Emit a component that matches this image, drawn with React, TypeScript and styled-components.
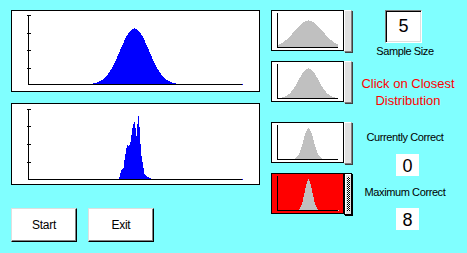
import React from 'react'
import styled, { createGlobalStyle } from 'styled-components'

const GlobalStyle = createGlobalStyle`
  html, body {
    margin: 0;
    padding: 0;
    background: #80ffff;
  }
  body {
    font-family: 'Liberation Sans', Arial, sans-serif;
  }
`

const BLUE = '#0000ff'
const GREY = '#c0c0c0'

// one column height per pixel for a bell curve
const bell = (from: number, to: number, center: number, peak: number, sigma: number) => {
  const out: number[] = []
  for (let x = from; x < to; x++) {
    out.push(Math.floor(peak * Math.exp(-((x - center) ** 2) / (2 * sigma * sigma))))
  }
  return out
}

const histPath = (x0: number, heights: number[], base: number) => {
  let d = `M${x0} ${base}`
  heights.forEach((h, i) => {
    d += `V${base - h}H${x0 + i + 1}`
  })
  return d + `V${base}Z`
}

type Plot = {
  width: number
  height: number
  axisX: number
  axisTop: number
  base: number
  axisEnd: number
  ticks?: number[]
  startX: number
  heights: number[]
  fill: string
  endDot?: string
}

const sampleBars = [
  2, 6, 9, 10, 11, 19, 25, 31, 34, 33, 34, 37, 44, 51, 55, 57, 51, 43, 55, 63, 52, 35,
  23, 17, 11, 5, 4, 3, 2, 2, 1, 1,
]

const mainPlot = {
  width: 247,
  height: 80,
  axisX: 16,
  axisEnd: 230,
  fill: BLUE,
  endDot: BLUE,
}

const populationPlot: Plot = {
  ...mainPlot,
  axisTop: 4,
  base: 73,
  ticks: [4, 22, 39, 57],
  startX: 17,
  heights: bell(17, 230, 122, 56, 14.5),
}

const samplePlot: Plot = {
  ...mainPlot,
  axisTop: 5,
  base: 75,
  ticks: [5, 22, 40, 58],
  startX: 107,
  heights: sampleBars,
}

const thumbPlot = (peak: number, sigma: number, endDot?: string): Plot => ({
  width: 71,
  height: 39,
  axisX: 5,
  axisTop: 2,
  base: 36,
  axisEnd: 66,
  startX: 6,
  heights: bell(6, 66, 36, peak, sigma),
  fill: GREY,
  endDot,
})

const choices = [
  { plot: thumbPlot(27, 14), gap: 0 },
  { plot: thumbPlot(30, 10), gap: 9 },
  { plot: thumbPlot(31, 5.2), gap: 19 },
  { plot: thumbPlot(31, 3.8, '#e0e0e0'), gap: 9, selected: true },
]

const Chart = ({ plot }: { plot: Plot }) => {
  const { width, height, axisX, axisTop, base, axisEnd, ticks = [], startX, heights, fill, endDot } = plot
  return (
    <Svg width={width} height={height} viewBox={`0 0 ${width} ${height}`}>
      <path d={histPath(startX, heights, base)} fill={fill} />
      <rect x={axisX} y={axisTop} width={1} height={base - axisTop + 1} fill="#000" />
      <rect x={axisX} y={base} width={axisEnd - axisX} height={1} fill="#000" />
      {ticks.map((t) => (
        <rect key={t} x={axisX - 1} y={t} width={4} height={1} fill="#000" />
      ))}
      {endDot && <rect x={axisEnd} y={base} width={1} height={1} fill={endDot} />}
    </Svg>
  )
}

const App = () => {
  return (
    <>
      <GlobalStyle />
      <Screen>
        <LeftColumn>
          <Panel>
            <Chart plot={populationPlot} />
          </Panel>
          <Panel>
            <Chart plot={samplePlot} />
          </Panel>
          <ButtonRow>
            <Button>Start</Button>
            <Button>Exit</Button>
          </ButtonRow>
        </LeftColumn>

        <ThumbColumn>
          {choices.map((c, i) => (
            <ThumbRow key={i} $gap={c.gap}>
              <ThumbBox $selected={c.selected}>
                <Chart plot={c.plot} />
              </ThumbBox>
              <Strip $selected={c.selected}>{c.selected && <FocusDots />}</Strip>
            </ThumbRow>
          ))}
        </ThumbColumn>

        <InfoColumn>
          <SizeBox>5</SizeBox>
          <Caption $top={2}>Sample Size</Caption>
          <Prompt>
            Click on Closest
            <br />
            Distribution
          </Prompt>
          <Caption $top={22}>Currently Correct</Caption>
          <ValueBox $top={10}>0</ValueBox>
          <Caption $top={10}>Maximum Correct</Caption>
          <ValueBox $top={9}>8</ValueBox>
        </InfoColumn>
      </Screen>
    </>
  )
}
export default App

const Screen = styled.div`
  display: flex;
  align-items: flex-start;
  width: 467px;
  height: 253px;
  padding: 10px 0 0 11px;
  box-sizing: border-box;
`

const LeftColumn = styled.div`
  display: flex;
  flex-direction: column;
  width: 249px;
`

const Svg = styled.svg`
  display: block;
  shape-rendering: crispEdges;
`

const Panel = styled.div`
  width: 249px;
  height: 82px;
  box-sizing: border-box;
  border: 1px solid #000;
  background: #fff;

  & + & {
    margin-top: 11px;
  }
`

const ButtonRow = styled.div`
  display: flex;
  gap: 11px;
  margin-top: 23px;
`

const Button = styled.button`
  width: 66px;
  height: 34px;
  padding: 0;
  box-sizing: border-box;
  background: #fff;
  border: 1px solid;
  border-color: #dfdfdf #000 #000 #dfdfdf;
  box-shadow: inset -1px -1px 0 #808080;
  font-family: 'Liberation Sans', Arial, sans-serif;
  font-size: 12px;
  letter-spacing: -0.3px;
  color: #000;
`

const ThumbColumn = styled.div`
  display: flex;
  flex-direction: column;
  width: 82px;
  margin-left: 11px;
`

const ThumbRow = styled.div<{ $gap: number }>`
  display: flex;
  align-items: flex-start;
  margin-top: ${({ $gap }) => $gap}px;
`

const ThumbBox = styled.div<{ $selected?: boolean }>`
  width: 73px;
  height: 41px;
  box-sizing: border-box;
  border: 1px solid #000;
  background: ${({ $selected }) => ($selected ? '#ff0000' : '#fff')};
`

const Strip = styled.div<{ $selected?: boolean }>`
  display: flex;
  width: 8px;
  height: 42px;
  box-sizing: border-box;
  background: #e0e0e0;
  border: 1px solid;
  border-color: ${({ $selected }) => ($selected ? '#000' : '#fff #808080 #808080 #fff')};
  box-shadow: ${({ $selected }) =>
    $selected ? 'inset 1px 1px 0 #fff, 1px 1px 0 #000' : '1px 1px 0 #404040'};
  padding: 3px 1px 3px 2px;
`

const FocusDots = styled.div`
  flex: 1;
  background: repeating-conic-gradient(#000 0 25%, #fff 0 50%) 0 0 / 2px 2px;
`

const InfoColumn = styled.div`
  display: flex;
  flex-direction: column;
  align-items: center;
  width: 104px;
`

const SizeBox = styled.div`
  display: flex;
  align-items: center;
  justify-content: center;
  width: 37px;
  height: 33px;
  margin-right: 3px;
  box-sizing: border-box;
  background: #fff;
  border: 1px solid;
  border-color: #808080 #fff #fff #808080;
  box-shadow: inset 1px 1px 0 #000, inset -1px -1px 0 #dfdfdf;
  font-size: 18px;
  color: #000;
`

const Caption = styled.div<{ $top: number }>`
  margin-top: ${({ $top }) => $top}px;
  font-size: 11px;
  line-height: 13px;
  letter-spacing: -0.4px;
  color: #000;
  white-space: nowrap;
`

const Prompt = styled.div`
  margin-top: 17px;
  margin-left: 6px;
  font-size: 13px;
  line-height: 17px;
  color: #ff0000;
  text-align: center;
  white-space: nowrap;
`

const ValueBox = styled.div<{ $top: number }>`
  width: 23px;
  height: 22px;
  margin-top: ${({ $top }) => $top}px;
  margin-left: 5px;
  padding-top: 2px;
  box-sizing: border-box;
  background: #fff;
  font-size: 18px;
  line-height: 20px;
  text-align: center;
  color: #000;
`
